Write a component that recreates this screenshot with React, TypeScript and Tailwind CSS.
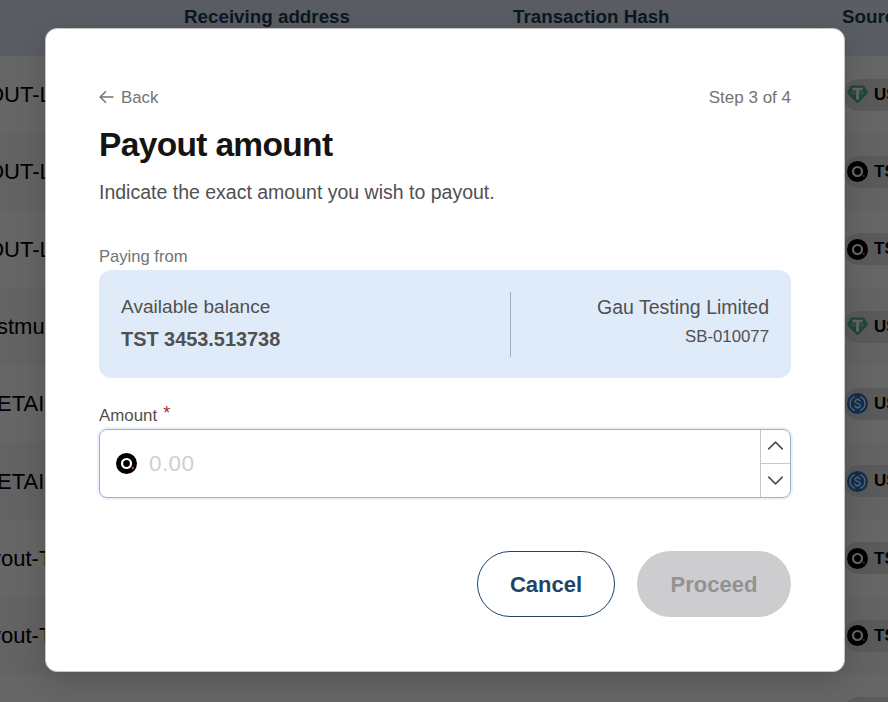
import { ChevronDown, ChevronUp } from "lucide-react";

type Coin = "USDT" | "TST" | "USDC";

const rows: { name: string; offset: string; coin: Coin }[] = [
  { name: "OUT-L", offset: "-ml-[13px]", coin: "USDT" },
  { name: "OUT-L", offset: "-ml-[13px]", coin: "TST" },
  { name: "OUT-L", offset: "-ml-[13px]", coin: "TST" },
  { name: "stmu", offset: "-ml-[3px]", coin: "USDT" },
  { name: "ETAI", offset: "-ml-[3px]", coin: "USDC" },
  { name: "ETAI", offset: "-ml-[3px]", coin: "USDC" },
  { name: "yout-T", offset: "-ml-[10px]", coin: "TST" },
  { name: "yout-T", offset: "-ml-[10px]", coin: "TST" },
  { name: "yout-T", offset: "-ml-[10px]", coin: "TST" },
];

const CoinIcon = ({ coin }: { coin: Coin }) => {
  if (coin === "USDT") {
    return (
      <svg viewBox="0 0 21 21" className="w-[21px] h-[21px] shrink-0">
        <path
          d="M4.6 1.500h11.800q.6 0 .9.500l3.400 6.300q.3.700-.2 1.200L11 18.900q-.5.500-1 0L.5 9.500q-.5-.5-.2-1.200L3.700 2q.3-.5.900-.5z"
          fill="#50af95"
        />
        <path d="M5.500 3.700h10v2.600h-3.600v9.200H9.100V6.300H5.500z" fill="#fff" />
        <ellipse
          cx="10.500"
          cy="8.800"
          rx="6.300"
          ry="1.200"
          fill="none"
          stroke="#fff"
          strokeWidth="0.500"
        />
      </svg>
    );
  }

  if (coin === "USDC") {
    return (
      <svg viewBox="0 0 21 21" className="w-[21px] h-[21px] shrink-0">
        <circle cx="10.500" cy="10.500" r="10.500" fill="#2775ca" />
        <g fill="none" stroke="#fff" strokeWidth="1.300">
          <path d="M8 3.600a7.300 7.300 0 0 0 0 13.800M13 3.600a7.300 7.300 0 0 1 0 13.800" />
          <path d="M13 8.500c0-1.200-1-1.900-2.500-1.900S8 7.300 8 8.500c0 2.600 5.200 1.300 5.200 3.900 0 1.200-1.100 2-2.700 2s-2.700-.8-2.700-2M10.500 5v1.600M10.500 14.400V16" />
        </g>
      </svg>
    );
  }

  return (
    <svg viewBox="0 0 21 21" className="w-[21px] h-[21px] shrink-0">
      <circle cx="10.500" cy="10.500" r="10.500" fill="#000" />
      <circle
        cx="10.500"
        cy="10.500"
        r="4.500"
        fill="none"
        stroke="#fff"
        strokeWidth="2.200"
      />
      <circle cx="16.800" cy="15" r="1.200" fill="#e8382f" />
    </svg>
  );
};

const Table = () => (
  <div className="w-[1172px]">
    <div className="flex h-14 bg-[#e0ebfa] pl-[184px] pt-[5px] text-[18.800px] leading-6 font-bold text-[#1d3c54]">
      <div className="w-[329px] shrink-0">Receiving address</div>
      <div className="w-[329px] shrink-0">Transaction Hash</div>
      <div className="w-[329px] shrink-0">Source</div>
    </div>
    {rows.map((row, i) => (
      <div
        key={i}
        className="flex h-[77.3px] items-center even:bg-white odd:bg-[#f7f7f7] text-black"
      >
        <div className="w-[843px] shrink-0 text-[22px]">
          <span className={"inline-block whitespace-nowrap " + row.offset}>
            {row.name}
          </span>
        </div>
        <div className="flex h-8 items-center gap-[6px] rounded-full bg-[#e0e0e0] pl-1 pr-3 text-[17px] font-bold">
          <CoinIcon coin={row.coin} />
          {row.coin}
        </div>
      </div>
    ))}
  </div>
);

const PayoutModal = () => (
  <div className="h-[644px] w-[800px] rounded-[12px] border border-[#c4c4c4] bg-white px-[53px] pt-[57px] text-[#505050] shadow-[0_8px_32px_rgba(0,0,0,0.18)]">
    <div className="flex h-6 items-center justify-between text-[17px] text-[#737373]">
      <button className="flex items-center gap-[7px] text-[16.800px]">
        <svg
          viewBox="0 0 15 14"
          className="w-[15px] h-[14px] -mt-[2px]"
          fill="none"
          stroke="currentColor"
          strokeWidth="1.500"
        >
          <path d="M14.500 7H1.500M7 1.200 1.200 7 7 12.800" />
        </svg>
        Back
      </button>
      <span>Step 3 of 4</span>
    </div>
    <h1 className="mt-[11px] text-[33.500px] leading-[48px] font-bold tracking-[-0.660px] text-[#141414]">
      Payout amount
    </h1>
    <p className="mt-[11px] text-[19.500px] leading-6">
      Indicate the exact amount you wish to payout.
    </p>
    <div className="mt-[41px] text-[16.600px] leading-6 text-[#737373]">
      Paying from
    </div>
    <div className="mt-px flex h-[108px] rounded-[12px] bg-[#e0ebf9] px-[22px] pt-[22px] text-[19.200px]">
      <div className="w-[389px]">
        <div className="mt-[3px] text-[19.100px] leading-6">
          Available balance
        </div>
        <div className="mt-[8px] text-[19.900px] leading-6 font-bold">
          TST 3453.513738
        </div>
      </div>
      <div className="h-[65px] flex-1 border-l border-[#9bb0c1] text-right">
        <div className="mt-[3px] text-[19.500px] leading-6">
          Gau Testing Limited
        </div>
        <div className="mt-[6px] text-[16.800px] leading-6">SB-010077</div>
      </div>
    </div>
    <label className="mt-[26px] flex h-6 text-[16.900px] leading-6">
      Amount
      <span className="-mt-[3px] ml-[6px] text-[18px] text-[#a02c38]">*</span>
    </label>
    <div className="mt-px flex h-[69px] rounded-[8px] border border-[#9bb0c4] shadow-[0_0_0_2px_#e9f3fd]">
      <div className="flex flex-1 items-center gap-[12px] pl-4">
        <CoinIcon coin="TST" />
        <input
          placeholder="0.00"
          className="w-full text-[22.500px] tracking-[0.400px] outline-none placeholder:text-[#cfcfcf]"
        />
      </div>
      <div className="flex w-[30px] flex-col border-l border-[#c8c8c8] text-[#4d4d4d]">
        <button className="flex flex-1 items-center justify-center border-b border-[#c8c8c8]">
          <ChevronUp size={27} strokeWidth={1.400} className="-mt-[2px] shrink-0" />
        </button>
        <button className="flex flex-1 items-center justify-center">
          <ChevronDown size={27} strokeWidth={1.400} className="shrink-0" />
        </button>
      </div>
    </div>
    <div className="mt-[53px] flex justify-end gap-[22px] text-[22px] font-bold">
      <button className="h-[66px] w-[138px] rounded-full border border-[#1f4468] text-[#1f4468]">
        Cancel
      </button>
      <button
        disabled
        className="h-[66px] w-[154px] rounded-full bg-[#cdcdcf] text-[#929292]"
      >
        Proceed
      </button>
    </div>
  </div>
);

const App = () => {
  return (
    <div className="relative h-[702px] w-[888px] overflow-hidden bg-white font-['Liberation_Sans',Arial,sans-serif]">
      <Table />
      <div className="absolute inset-0 bg-black/60 pl-[45px] pt-7">
        <PayoutModal />
      </div>
    </div>
  );
};

export default App;
